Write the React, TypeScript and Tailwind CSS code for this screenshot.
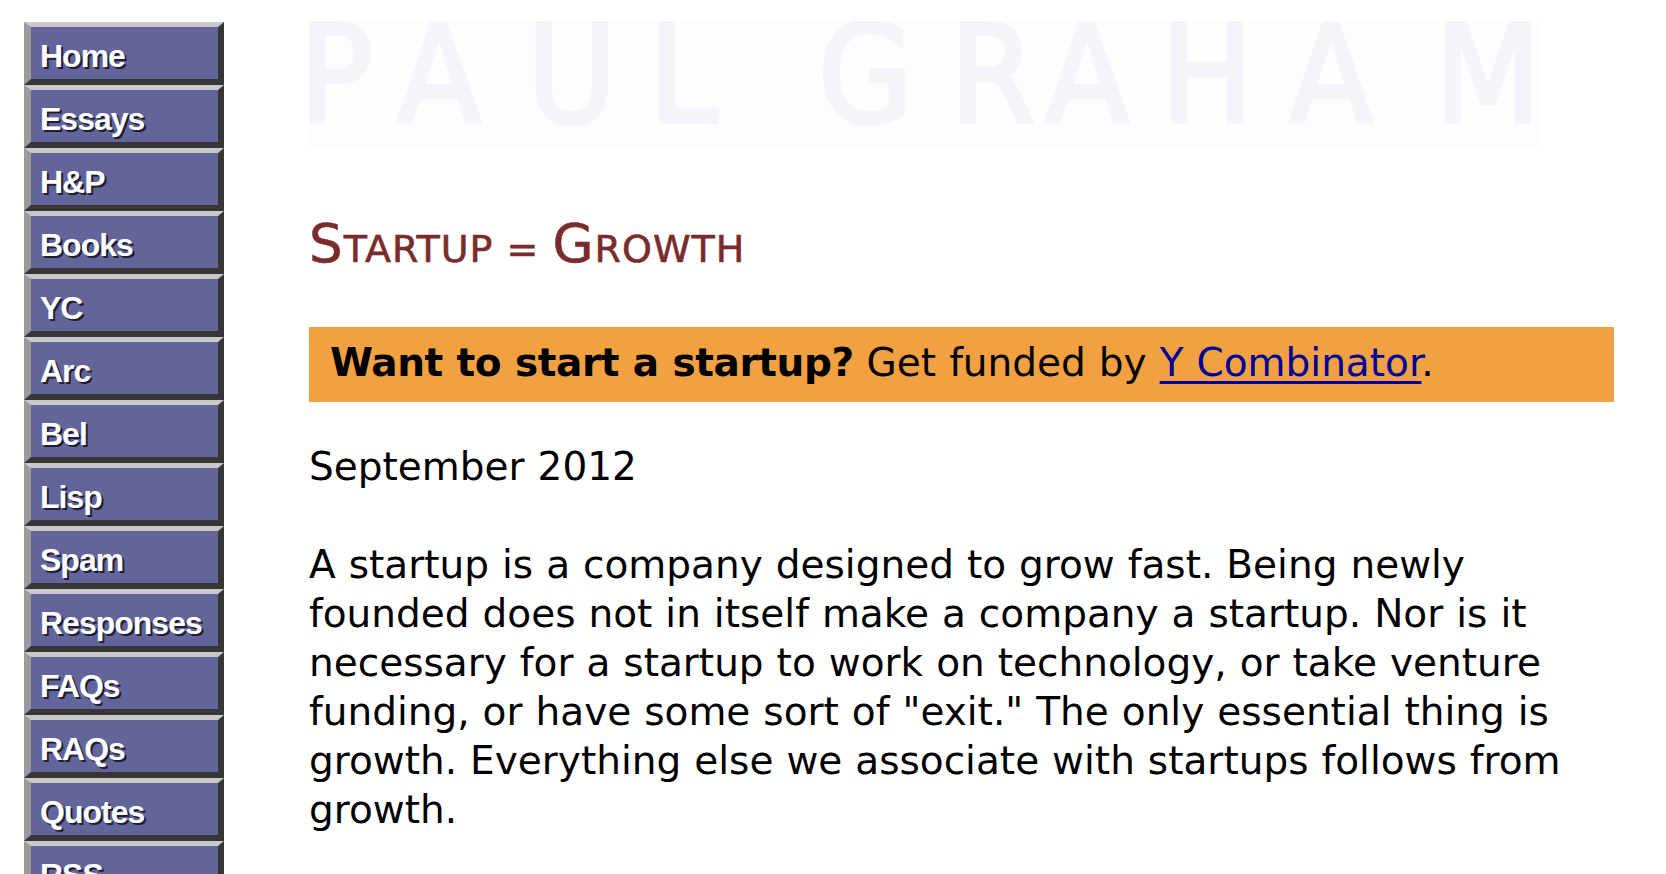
import React from 'react';

const navItems = ['Home', 'Essays', 'H&P', 'Books', 'YC', 'Arc', 'Bel', 'Lisp', 'Spam', 'Responses', 'FAQs', 'RAQs', 'Quotes', 'RSS', 'Bio'];

// faint "PAUL GRAHAM" header image, letters placed one by one
const logoLetters: [string, number][] = [
  ['P', -10], ['A', 88], ['U', 218], ['L', 340], ['G', 509],
  ['R', 641], ['A', 736], ['H', 852], ['A', 980], ['M', 1126],
];

const NavButton: React.FC<{ label: string }> = ({ label }) => (
  <div className="flex h-[63px] w-[200px] items-center border-t-[5px] border-r-[6px] border-b-[6px] border-l-[7px] border-t-[#c9c9c9] border-r-[#363636] border-b-[#363636] border-l-[#9b9b9b] bg-[#63659a] pt-[6px] pl-[9px]">
    <span className="font-['Liberation_Sans',Arial,sans-serif] text-[32px] font-bold leading-none tracking-[-1px] text-white [text-shadow:2px_2px_0_#1d1d33]">
      {label}
    </span>
  </div>
);

const App: React.FC = () => {
  return (
    <div className="h-[874px] w-full overflow-hidden bg-white">
      <div className="flex gap-[85px] pl-[24px] pt-[22px]">
        <nav className="flex w-[200px] shrink-0 flex-col">
          {navItems.map((item) => (
            <NavButton key={item} label={item} />
          ))}
        </nav>

        <main className="-mt-[1px] w-[1305px] shrink-0 font-['DejaVu_Sans',Verdana,sans-serif] text-black">
          <div className="h-[128px] w-[1232px] bg-[#fdfdfd]">
            <svg width="1232" height="128" viewBox="0 0 1232 128">
              {logoLetters.map(([ch, x], i) => (
                <text
                  key={i}
                  x={x}
                  y={101}
                  fill="#f5f4fa"
                  stroke="#f5f4fa"
                  strokeWidth={4}
                  fontSize={136}
                  fontFamily="'DejaVu Sans Condensed', 'DejaVu Sans', sans-serif"
                >
                  {ch}
                </text>
              ))}
            </svg>
          </div>

          <h1 className="mt-[69px] text-[53px] font-normal leading-[52px] tracking-[1px] text-[#7a2b2b] [-webkit-text-stroke:0.6px_#7a2b2b]">
            S<span className="text-[38px]">TARTUP</span>
            <span className="text-[38px]"> = </span>G<span className="text-[38px]">ROWTH</span>
          </h1>

          <div className="mt-[52px] h-[75px] bg-[#f1a042] pt-[11px] pl-[21px] text-[39px] leading-[49px] [word-spacing:0.6px]">
            <b className="tracking-[-0.4px]">Want to start a startup?</b> Get funded by{' '}
            <a href="#" className="text-[#000099] underline underline-offset-[5px]">Y Combinator</a>.
          </div>

          <p className="mt-[40px] text-[39px] leading-[49px] [word-spacing:0.6px]">September 2012</p>

          <p className="mt-[49px] text-[39px] leading-[49px] [word-spacing:0.6px]">
            A startup is a company designed to grow fast. Being newly founded does not in itself make a company a startup. Nor is it necessary for a startup to work on technology, or take venture funding, or have some sort of "exit." The only essential thing is growth. Everything else we associate with startups follows from growth.
          </p>

          <p className="mt-[49px] text-[39px] leading-[49px] [word-spacing:0.6px]">
            If you want to start one it's important to understand that. Startups are so hard that you can't be pointed off to the side and hope to succeed.
          </p>
        </main>
      </div>
    </div>
  );
};

export default App;
